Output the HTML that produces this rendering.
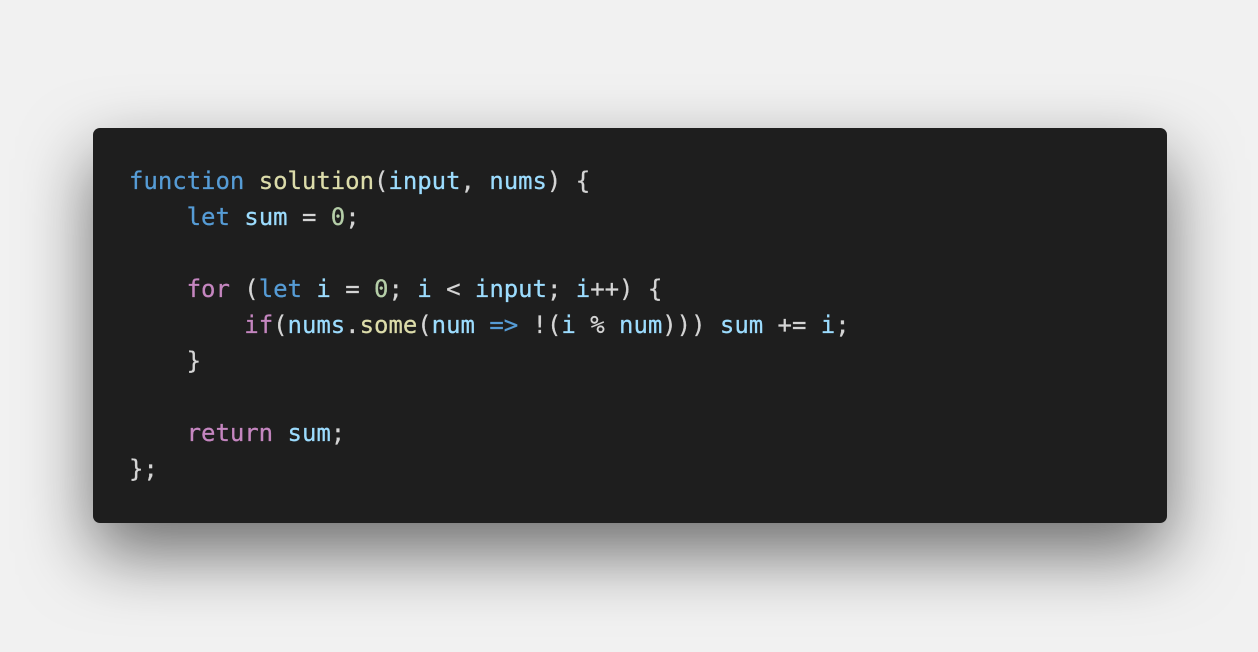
<!DOCTYPE html>
<html><head><style>
html,body{margin:0;padding:0;width:1258px;height:652px;background:#f1f1f1;overflow:hidden}
.box{position:absolute;left:93px;top:128px;width:1074px;height:395px;background:#1e1e1e;border-radius:7px;box-shadow:0 30px 70px rgba(0,0,0,0.55)}
pre{margin:0;position:absolute;left:36px;top:35px;font-family:"DejaVu Sans Mono","Liberation Mono",monospace;font-size:24px;line-height:36px;letter-spacing:-0.04px;color:#d4d4d4;-webkit-text-stroke:0.25px currentColor}
.k{color:#569cd6}.f{color:#dcdcaa}.v{color:#9cdcfe}.n{color:#b5cea8}.c{color:#c586c0}
</style></head><body><div class="box"><pre><span class="k">function</span> <span class="f">solution</span>(<span class="v">input</span>, <span class="v">nums</span>) {
    <span class="k">let</span> <span class="v">sum</span> = <span class="n">0</span>;

    <span class="c">for</span> (<span class="k">let</span> <span class="v">i</span> = <span class="n">0</span>; <span class="v">i</span> &lt; <span class="v">input</span>; <span class="v">i</span>++) {
        <span class="c">if</span>(<span class="v">nums</span>.<span class="f">some</span>(<span class="v">num</span> <span class="k">=&gt;</span> !(<span class="v">i</span> % <span class="v">num</span>))) <span class="v">sum</span> += <span class="v">i</span>;
    }

    <span class="c">return</span> <span class="v">sum</span>;
};</pre></div></body></html>
